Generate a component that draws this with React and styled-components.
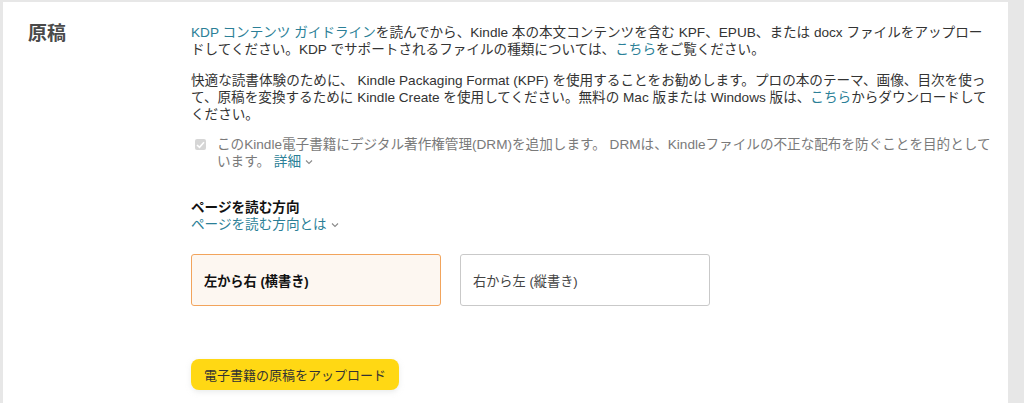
import React, { useState } from "react";
import styled, { createGlobalStyle } from "styled-components";

const GlobalStyle = createGlobalStyle`
  html, body {
    margin: 0;
    padding: 0;
    background: #e7e7e7;
  }
  body {
    font-family: "Liberation Sans", "Noto Sans CJK JP", Arial, sans-serif;
    color: #333;
  }
`;

const Panel = styled.section`
  background: #fff;
  margin: 2px 0 0 3px;
  width: 1005px;
  height: 401px;
  display: grid;
  grid-template-columns: 188px 800px;
  box-sizing: border-box;
  padding-top: 22px;
`;

const Heading = styled.h2`
  margin: 0;
  padding-left: 25px;
  font-size: 19px;
  line-height: 20px;
  font-weight: 700;
  color: #4a4a4a;
`;

const Content = styled.div`
  font-size: 13.6px;
  line-height: 17px;
`;

const Para = styled.p`
  margin: 0 0 14px;
`;

const Link = styled.a`
  color: #2b7f97;
  text-decoration: none;
  cursor: pointer;
`;

const Chevron = ({ color = "#8a8a8a" }) => (
  <svg width="8" height="6" viewBox="0 0 8 6" style={{ marginLeft: 4, verticalAlign: 1 }}>
    <path d="M1 1.5 L4 4.5 L7 1.5" fill="none" stroke={color} strokeWidth="1.1" />
  </svg>
);

const DrmRow = styled.label`
  display: flex;
  gap: 11px;
  padding-left: 4px;
  color: #7a7a7a;
  margin-top: -1px;
`;

const Box = styled.span`
  flex: none;
  width: 11px;
  height: 11px;
  margin-top: 3px;
  border-radius: 2px;
  background: #d6d6d6;
  display: flex;
  align-items: center;
  justify-content: center;
`;

const SubTitle = styled.div`
  margin-top: 30px;
  font-weight: 700;
  color: #111;
  line-height: 16px;
`;

const Tiles = styled.div`
  display: flex;
  gap: 19px;
  margin-top: 21px;
`;

const Tile = styled.button`
  width: 250px;
  height: 52px;
  box-sizing: border-box;
  border-radius: 3px;
  border: 1px solid ${p => (p.$active ? "#f2a45c" : "#c9c9c9")};
  background: ${p => (p.$active ? "#fdf7f1" : "#fff")};
  font-family: inherit;
  font-size: 13.2px;
  font-weight: ${p => (p.$active ? 700 : 400)};
  color: ${p => (p.$active ? "#111" : "#444")};
  text-align: left;
  padding: 0 0 0 12px;
  cursor: pointer;
`;

const Upload = styled.button`
  margin-top: 53px;
  height: 31px;
  padding: 0 13px;
  border: none;
  border-radius: 8px;
  background: #ffd814;
  box-shadow: 0 2px 5px rgba(213, 217, 217, 0.5);
  font-family: inherit;
  font-size: 13px;
  color: #333;
  cursor: pointer;
`;

export default function App() {
  const [dir, setDir] = useState("ltr");
  return (
    <>
      <GlobalStyle />
      <Panel>
        <Heading>原稿</Heading>
        <Content>
          <Para>
            <Link>KDP コンテンツ ガイドライン</Link>を読んでから、Kindle 本の本文コンテンツを含む KPF、EPUB、または docx ファイルをアップロードしてください。KDP でサポートされるファイルの種類については、<Link>こちら</Link>をご覧ください。
          </Para>
          <Para>
            快適な読書体験のために、 Kindle Packaging Format (KPF) を使用することをお勧めします。プロの本のテーマ、画像、目次を使って、原稿を変換するために Kindle Create を使用してください。無料の Mac 版または Windows 版は、<Link>こちら</Link>からダウンロードしてください。
          </Para>
          <DrmRow>
            <Box>
              <svg width="9" height="8" viewBox="0 0 9 8">
                <path d="M1 4 L3.5 6.3 L8 1.3" fill="none" stroke="#fff" strokeWidth="1.6" />
              </svg>
            </Box>
            <span>
              このKindle電子書籍にデジタル著作権管理(DRM)を追加します。 DRMは、Kindleファイルの不正な配布を防ぐことを目的としています。 <Link>詳細</Link>
              <Chevron />
            </span>
          </DrmRow>
          <SubTitle>ページを読む方向</SubTitle>
          <div>
            <Link>ページを読む方向とは</Link>
            <Chevron />
          </div>
          <Tiles>
            <Tile $active={dir === "ltr"} onClick={() => setDir("ltr")}>
              左から右 (横書き)
            </Tile>
            <Tile $active={dir === "rtl"} onClick={() => setDir("rtl")}>
              右から左 (縦書き)
            </Tile>
          </Tiles>
          <Upload>電子書籍の原稿をアップロード</Upload>
        </Content>
      </Panel>
    </>
  );
}
